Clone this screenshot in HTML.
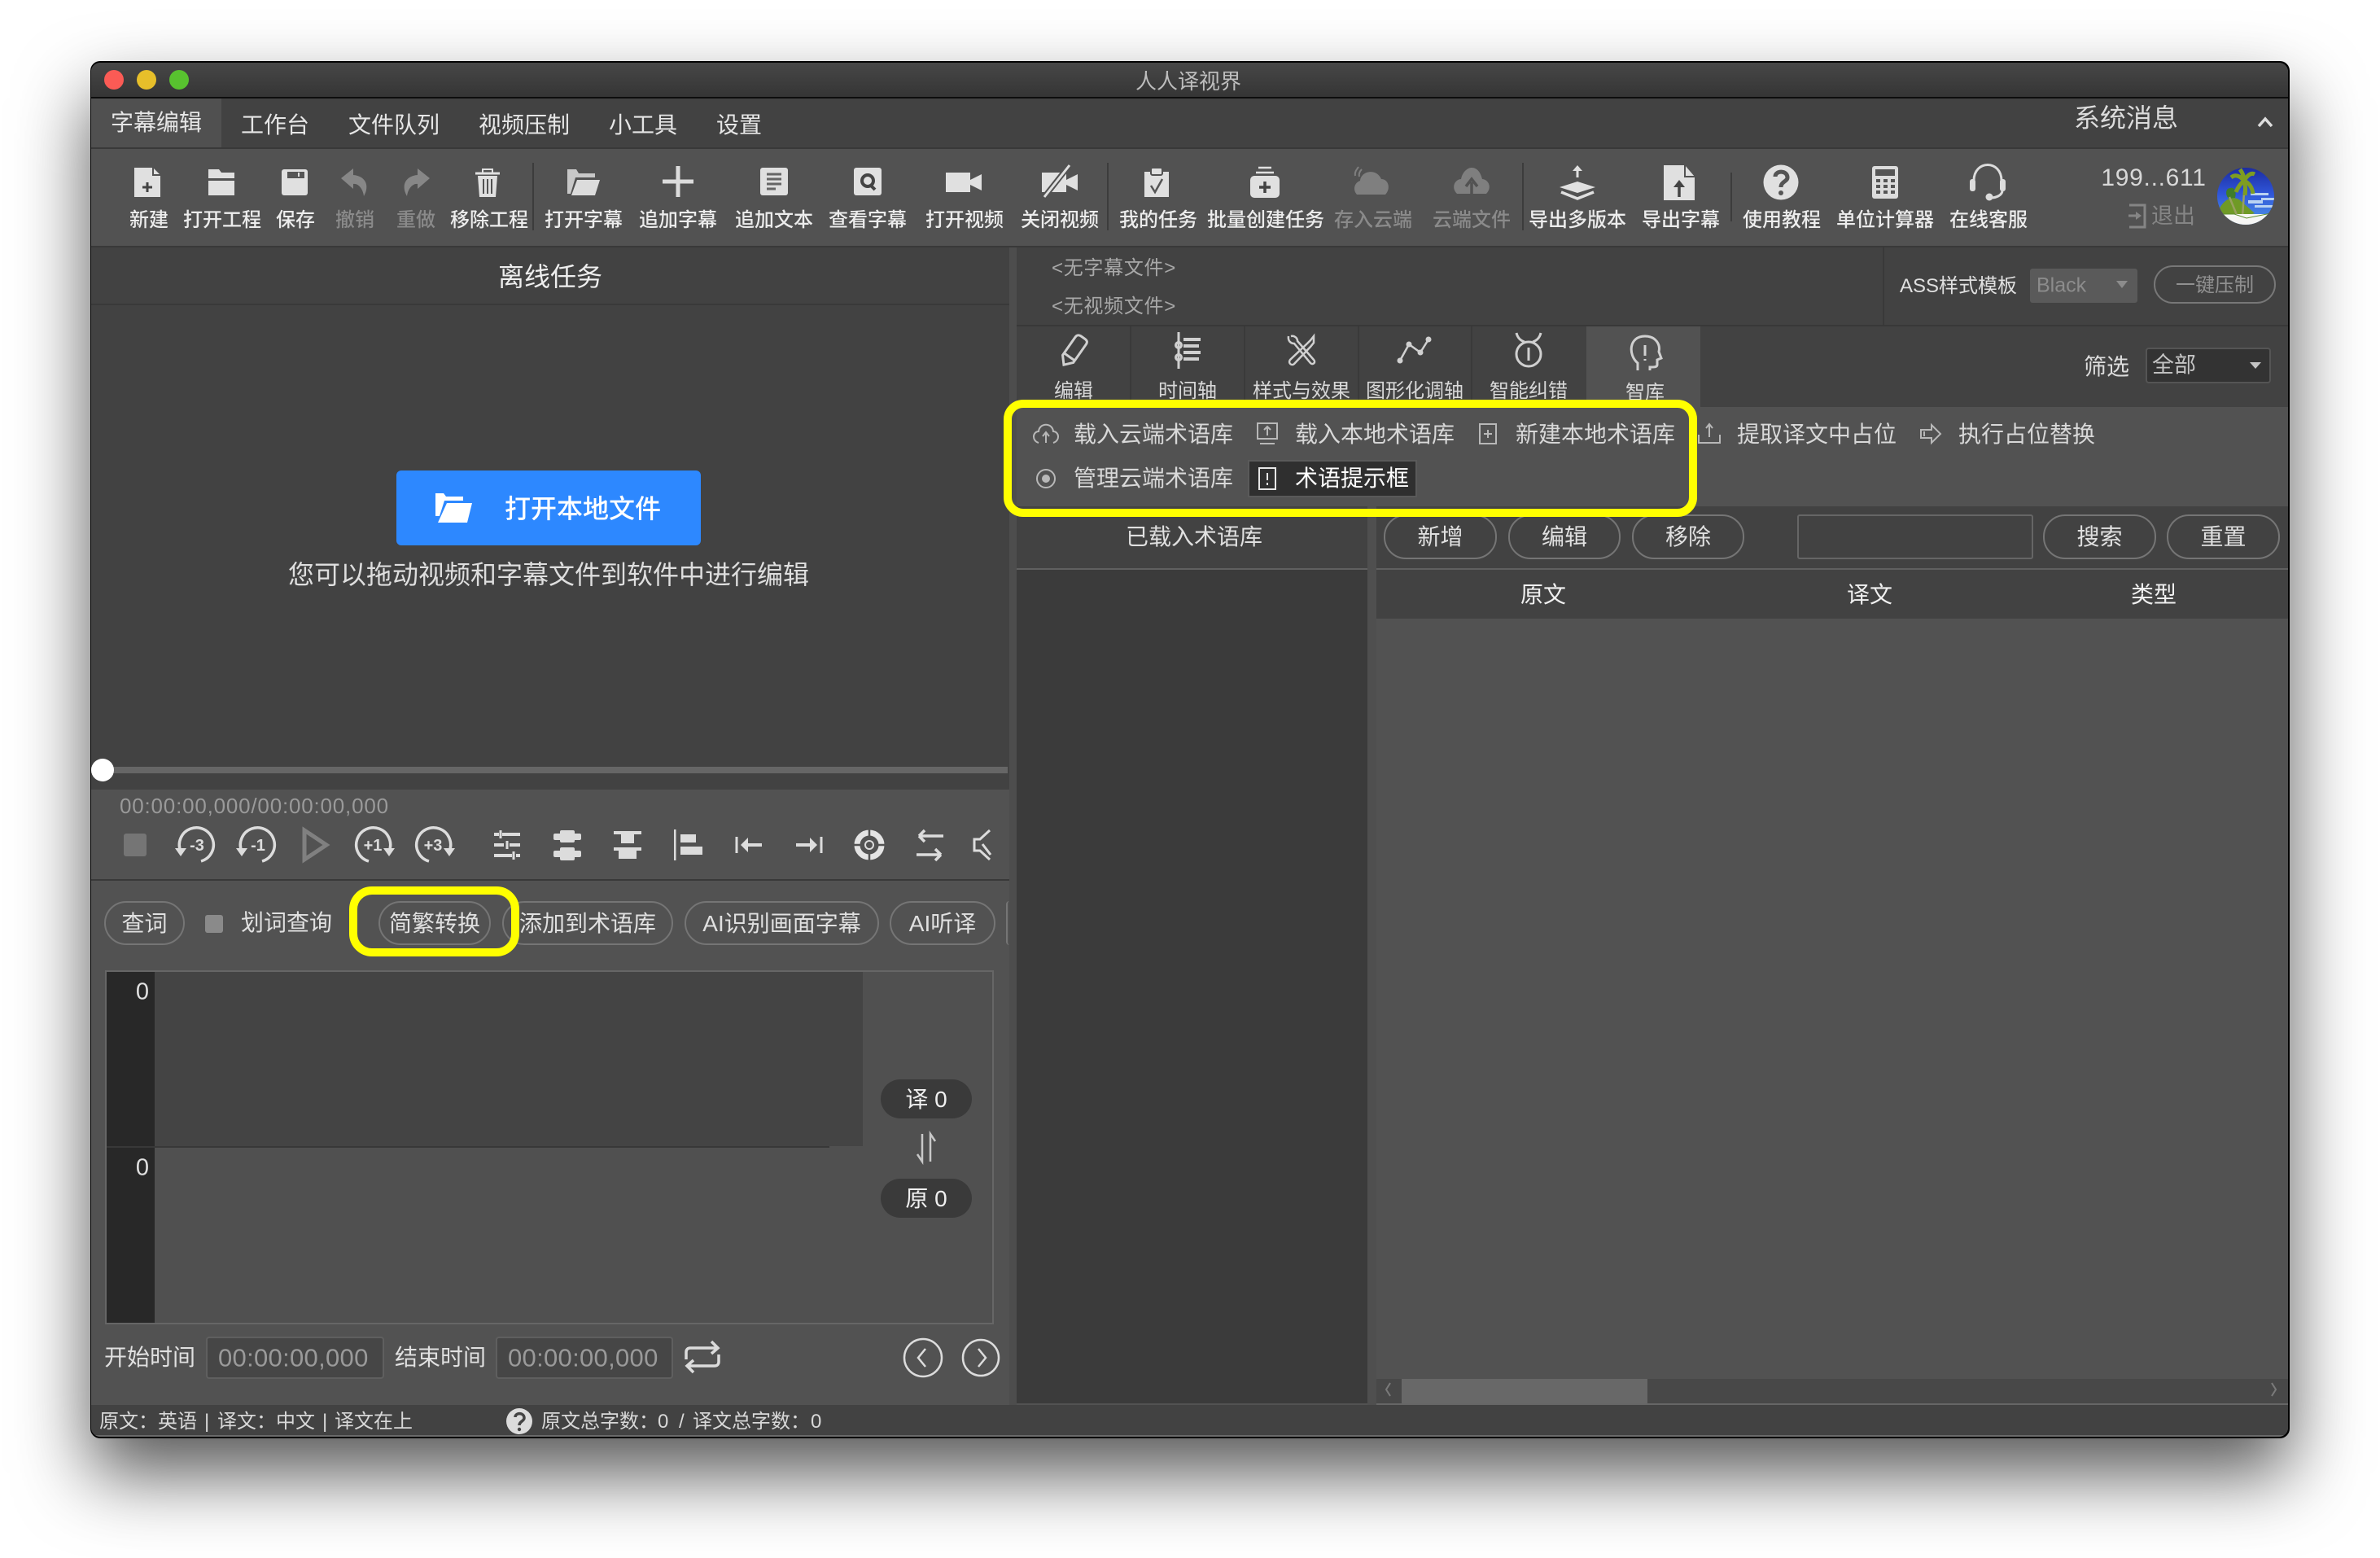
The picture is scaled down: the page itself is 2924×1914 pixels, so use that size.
<!DOCTYPE html>
<html lang="zh-CN">
<head>
<meta charset="utf-8">
<title>人人译视界</title>
<style>
html,body{margin:0;padding:0;width:2924px;height:1914px;overflow:hidden;background:#fff}
body{position:relative;font-family:"Liberation Sans","Noto Sans CJK SC",sans-serif;color:#e6e6e6}
.r{position:absolute;box-sizing:border-box}
.c,.l{position:absolute;white-space:nowrap;line-height:1}
.c{transform:translate(-50%,calc(-50% + 2px))}
.l{transform:translateY(calc(-50% + 2px))}
.tb{font-size:24px;top:269px;color:#ececec;font-weight:500}
.dis{color:#8a8a8a}
.m{font-size:28px;top:152px;color:#e6e6e6}
.s{font-size:28px;color:#d8d8d8}
.tab{font-size:24px;top:479px;color:#d8d8d8}
.st{font-size:24px;top:1745px;color:#d8d8d8}
.p{position:absolute;box-sizing:border-box;height:54px;border:2px solid #757575;border-radius:27px;font-size:28px;color:#e0e0e0;text-align:center;line-height:51px;white-space:nowrap}
svg{position:absolute;left:0;top:0}
</style>
</head>
<body>
<!-- window -->
<div class="r" style="left:111px;top:75px;width:2702px;height:1692px;border-radius:12px;background:#000;box-shadow:0 44px 90px rgba(0,0,0,.66)"></div>
<div class="r" style="left:112px;top:77px;width:2699px;height:1688px;border-radius:11px;overflow:hidden;background:#525252">
  <div class="r" style="left:0;top:0;width:2700px;height:42px;background:linear-gradient(#474747,#353535)"></div>
  <div class="r" style="left:0;top:42px;width:2700px;height:2px;background:#0d0d0d"></div>
  <div class="r" style="left:0;top:44px;width:2700px;height:60px;background:#424242"></div>
  <div class="r" style="left:0;top:44px;width:160px;height:60px;background:#505050"></div>
  <div class="r" style="left:0;top:104px;width:2700px;height:2px;background:#393939"></div>
  <div class="r" style="left:0;top:106px;width:2700px;height:119px;background:#525252"></div>
  <div class="r" style="left:0;top:225px;width:2700px;height:2px;background:#393939"></div>
  <!-- left top -->
  <div class="r" style="left:0;top:227px;width:1128px;height:666px;background:#424242"></div>
  <div class="r" style="left:0;top:296px;width:1128px;height:2px;background:#393939"></div>
  <div class="r" style="left:0;top:865px;width:1126px;height:8px;background:#666"></div>
  <div class="r" style="left:1128px;top:227px;width:9px;height:1422px;background:#4d4d4d"></div>
  <!-- lower-left -->
  <div class="r" style="left:0;top:893px;width:1128px;height:756px;background:#525252"></div>
  <div class="r" style="left:0;top:1003px;width:1128px;height:2px;background:#393939"></div>
  <!-- editor -->
  <div class="r" style="left:17px;top:1115px;width:1092px;height:435px;border:2px solid #666;background:#505050"></div>
  <div class="r" style="left:19px;top:1117px;width:59px;height:431px;background:#282828"></div>
  <div class="r" style="left:78px;top:1117px;width:870px;height:214px;background:#444"></div>
  <div class="r" style="left:19px;top:1331px;width:888px;height:2px;background:#383838"></div>
  <!-- inputs -->
  <div class="r" style="left:141px;top:1565px;width:219px;height:52px;border:2px solid #5f5f5f;border-radius:4px;background:#464646"></div>
  <div class="r" style="left:497px;top:1565px;width:218px;height:52px;border:2px solid #5f5f5f;border-radius:4px;background:#464646"></div>
  <!-- right top -->
  <div class="r" style="left:1137px;top:227px;width:1563px;height:96px;background:#424242"></div>
  <div class="r" style="left:2201px;top:227px;width:2px;height:96px;background:#393939"></div>
  <div class="r" style="left:1137px;top:322px;width:1563px;height:2px;background:#383838"></div>
  <div class="r" style="left:1137px;top:324px;width:1563px;height:99px;background:#424242"></div>
  <div class="r" style="left:1276px;top:324px;width:2px;height:99px;background:#3a3a3a"></div>
  <div class="r" style="left:1416px;top:324px;width:2px;height:99px;background:#3a3a3a"></div>
  <div class="r" style="left:1556px;top:324px;width:2px;height:99px;background:#3a3a3a"></div>
  <div class="r" style="left:1695px;top:324px;width:2px;height:99px;background:#3a3a3a"></div>
  <div class="r" style="left:1837px;top:324px;width:140px;height:99px;background:#525252"></div>
  <!-- sub toolbar -->
  <div class="r" style="left:1137px;top:423px;width:1563px;height:122px;background:#525252"></div>
  <div class="r" style="left:1421px;top:488px;width:208px;height:46px;background:#2f2f2f;border:2px solid #5a5a5a"></div>
  <!-- row pills -->
  <div class="r" style="left:1137px;top:545px;width:1563px;height:76px;background:#424242"></div>
  <div class="r" style="left:1137px;top:621px;width:1563px;height:2px;background:#606060"></div>
  <div class="r" style="left:1137px;top:623px;width:431px;height:1024px;background:#3b3b3b"></div>
  <div class="r" style="left:1568px;top:545px;width:11px;height:1104px;background:#4f4f4f"></div>
  <div class="r" style="left:1579px;top:623px;width:1121px;height:60px;background:#424242"></div>
  <div class="r" style="left:1579px;top:683px;width:1121px;height:934px;background:#525252"></div>
  <div class="r" style="left:1579px;top:1617px;width:1121px;height:30px;background:#484848"></div>
  <div class="r" style="left:1610px;top:1617px;width:302px;height:30px;background:#686868"></div>
  <div class="r" style="left:1579px;top:1647px;width:1121px;height:2px;background:#666"></div>
  <!-- status -->
  <div class="r" style="left:0;top:1649px;width:2700px;height:37px;background:#424242"></div>
  <div class="r" style="left:0;top:1686px;width:2700px;height:2px;background:#6a6a6a"></div>
</div>

<!-- traffic lights -->
<div class="r" style="left:128px;top:86px;width:24px;height:24px;border-radius:50%;background:#fb5b55"></div>
<div class="r" style="left:168px;top:86px;width:24px;height:24px;border-radius:50%;background:#e7bf2a"></div>
<div class="r" style="left:208px;top:86px;width:24px;height:24px;border-radius:50%;background:#58c22f"></div>
<span class="c" style="left:1460px;top:98px;font-size:26px;color:#bdbdbd">人人译视界</span>

<!-- menu -->
<span class="c m" style="left:192px;top:149px">字幕编辑</span>
<span class="c m" style="left:338px">工作台</span>
<span class="c m" style="left:484px">文件队列</span>
<span class="c m" style="left:644px">视频压制</span>
<span class="c m" style="left:790px">小工具</span>
<span class="c m" style="left:908px">设置</span>
<span class="c" style="left:2612px;top:143px;font-size:32px;color:#dcdcdc">系统消息</span>

<!-- toolbar labels -->
<span class="c tb" style="left:183px">新建</span>
<span class="c tb" style="left:273px">打开工程</span>
<span class="c tb" style="left:363px">保存</span>
<span class="c tb dis" style="left:436px">撤销</span>
<span class="c tb dis" style="left:511px">重做</span>
<span class="c tb" style="left:601px">移除工程</span>
<span class="c tb" style="left:717px">打开字幕</span>
<span class="c tb" style="left:833px">追加字幕</span>
<span class="c tb" style="left:951px">追加文本</span>
<span class="c tb" style="left:1066px">查看字幕</span>
<span class="c tb" style="left:1185px">打开视频</span>
<span class="c tb" style="left:1302px">关闭视频</span>
<span class="c tb" style="left:1423px">我的任务</span>
<span class="c tb" style="left:1555px">批量创建任务</span>
<span class="c tb dis" style="left:1687px">存入云端</span>
<span class="c tb dis" style="left:1808px">云端文件</span>
<span class="c tb" style="left:1938px">导出多版本</span>
<span class="c tb" style="left:2065px">导出字幕</span>
<span class="c tb" style="left:2189px">使用教程</span>
<span class="c tb" style="left:2316px">单位计算器</span>
<span class="c tb" style="left:2443px">在线客服</span>
<span class="c" style="left:2646px;top:217px;font-size:30px;letter-spacing:.7px;color:#d8d8d8">199...611</span>
<span class="c" style="left:2670px;top:264px;font-size:27px;color:#858585">退出</span>

<!-- left panel text -->
<span class="c" style="left:676px;top:338px;font-size:32px;color:#eee">离线任务</span>
<div class="r" style="left:487px;top:578px;width:374px;height:92px;background:#2d88ff;border-radius:6px"></div>
<span class="c" style="left:716px;top:623px;font-size:32px;color:#fff;font-weight:500">打开本地文件</span>
<span class="c" style="left:674px;top:704px;font-size:32px;color:#dedede">您可以拖动视频和字幕文件到软件中进行编辑</span>
<div class="r" style="left:112px;top:932px;width:28px;height:28px;border-radius:50%;background:#fff"></div>
<span class="l" style="left:147px;top:988px;font-size:26px;color:#9a9a9a;letter-spacing:.8px">00:00:00,000/00:00:00,000</span>

<!-- pills left -->
<div class="p" style="left:128px;top:1107px;width:99px">查词</div>
<div class="r" style="left:252px;top:1124px;width:22px;height:22px;background:#8a8a8a;border-radius:3px"></div>
<span class="l" style="left:296px;top:1132px;font-size:28px;color:#e0e0e0">划词查询</span>
<div class="p" style="left:465px;top:1107px;width:138px">简繁转换</div>
<div class="p" style="left:617px;top:1107px;width:210px">添加到术语库</div>
<div class="p" style="left:841px;top:1107px;width:239px">AI识别画面字幕</div>
<div class="p" style="left:1093px;top:1107px;width:130px">AI听译</div>
<div class="r" style="left:1236px;top:1107px;width:4px;height:54px;border-left:2px solid #757575;border-radius:27px 0 0 27px"></div>

<span class="c" style="left:175px;top:1217px;font-size:29px;color:#e0e0e0">0</span>
<span class="c" style="left:175px;top:1433px;font-size:29px;color:#e0e0e0">0</span>
<div class="r" style="left:1082px;top:1326px;width:112px;height:48px;border-radius:24px;background:#3a3a3a"></div>
<span class="c" style="left:1138px;top:1349px;font-size:28px;color:#f0f0f0">译 0</span>
<div class="r" style="left:1082px;top:1448px;width:112px;height:48px;border-radius:24px;background:#3a3a3a"></div>
<span class="c" style="left:1138px;top:1471px;font-size:28px;color:#f0f0f0">原 0</span>

<span class="l" style="left:128px;top:1666px;font-size:28px;color:#e0e0e0">开始时间</span>
<span class="l" style="left:268px;top:1666px;font-size:31px;letter-spacing:.3px;color:#9a9a9a">00:00:00,000</span>
<span class="l" style="left:485px;top:1666px;font-size:28px;color:#e0e0e0">结束时间</span>
<span class="l" style="left:624px;top:1666px;font-size:31px;letter-spacing:.3px;color:#9a9a9a">00:00:00,000</span>

<span class="l st" style="left:122px">原文：</span>
<span class="l st" style="left:194px">英语</span>
<span class="l st" style="left:251px">|</span>
<span class="l st" style="left:267px">译文：</span>
<span class="l st" style="left:339px">中文</span>
<span class="l st" style="left:396px">|</span>
<span class="l st" style="left:411px">译文在上</span>
<span class="l st" style="left:665px">原文总字数：</span>
<span class="l st" style="left:808px">0</span>
<span class="l st" style="left:834px">/</span>
<span class="l st" style="left:851px">译文总字数：</span>
<span class="l st" style="left:996px">0</span>

<!-- right panel -->
<span class="l" style="left:1292px;top:328px;font-size:24px;letter-spacing:.7px;color:#a8a8a8">&lt;无字幕文件&gt;</span>
<span class="l" style="left:1292px;top:375px;font-size:24px;letter-spacing:.7px;color:#a8a8a8">&lt;无视频文件&gt;</span>
<span class="l" style="left:2334px;top:350px;font-size:24px;color:#e0e0e0">ASS样式模板</span>
<div class="r" style="left:2494px;top:330px;width:132px;height:42px;background:#5a5a5a;border-radius:3px"></div>
<span class="l" style="left:2502px;top:349px;font-size:25px;color:#8c8c8c">Black</span>
<div class="r" style="left:2646px;top:326px;width:150px;height:47px;border:2px solid #777;border-radius:24px"></div>
<span class="c" style="left:2721px;top:349px;font-size:24px;color:#909090">一键压制</span>

<span class="c tab" style="left:1319px">编辑</span>
<span class="c tab" style="left:1459px">时间轴</span>
<span class="c tab" style="left:1599px">样式与效果</span>
<span class="c tab" style="left:1738px">图形化调轴</span>
<span class="c tab" style="left:1878px">智能纠错</span>
<span class="c tab" style="left:2021px;top:481px">智库</span>
<span class="c" style="left:2588px;top:449px;font-size:28px;color:#dcdcdc">筛选</span>
<div class="r" style="left:2636px;top:427px;width:154px;height:44px;background:#333;border:2px solid #555;border-radius:4px"></div>
<span class="l" style="left:2644px;top:447px;font-size:27px;color:#c4c4c4">全部</span>

<span class="l s" style="left:1319px;top:532px">载入云端术语库</span>
<span class="l s" style="left:1591px;top:532px">载入本地术语库</span>
<span class="l s" style="left:1862px;top:532px">新建本地术语库</span>
<span class="l s" style="left:2134px;top:532px">提取译文中占位</span>
<span class="l s" style="left:2406px;top:532px">执行占位替换</span>
<span class="l s" style="left:1319px;top:586px">管理云端术语库</span>
<span class="l s" style="left:1591px;top:586px;color:#fff">术语提示框</span>

<span class="c" style="left:1467px;top:658px;font-size:28px;color:#e0e0e0">已载入术语库</span>
<div class="p" style="left:1700px;top:632px;width:139px;height:55px;line-height:52px">新增</div>
<div class="p" style="left:1853px;top:632px;width:138px;height:55px;line-height:52px">编辑</div>
<div class="p" style="left:2005px;top:632px;width:138px;height:55px;line-height:52px">移除</div>
<div class="r" style="left:2208px;top:632px;width:290px;height:55px;border:2px solid #666;border-radius:3px"></div>
<div class="p" style="left:2510px;top:632px;width:139px;height:55px;line-height:52px">搜索</div>
<div class="p" style="left:2662px;top:632px;width:139px;height:55px;line-height:52px">重置</div>
<span class="c" style="left:1896px;top:729px;font-size:28px;color:#f0f0f0">原文</span>
<span class="c" style="left:2297px;top:729px;font-size:28px;color:#f0f0f0">译文</span>
<span class="c" style="left:2646px;top:729px;font-size:28px;color:#f0f0f0">类型</span>

<!-- icons -->
<svg width="2924" height="1914" viewBox="0 0 2924 1914">
<defs>
<clipPath id="av"><circle cx="2759" cy="241" r="35"/></clipPath>
<linearGradient id="sky" x1="0" y1="0" x2="0" y2="1"><stop offset="0" stop-color="#1c2ca0"/><stop offset=".45" stop-color="#2f55d8"/><stop offset="1" stop-color="#4f96ea"/></linearGradient>
</defs>
<!-- separators in toolbar -->
<path d="M655 200V283M1361 200V283M1871 200V283M2127 212V272" stroke="#3c3c3c" stroke-width="2" fill="none"/>
<path d="M2775 155L2783 146 2791 155" stroke="#ddd" stroke-width="3.5" fill="none"/>

<!-- new -->
<g transform="translate(181,224)"><path d="M-16-18H7L16-9V18H-16Z" fill="#e0e0e0"/><path d="M7-19V-9H17" stroke="#525252" stroke-width="2" fill="none"/><path d="M-6 6H6M0 0V12" stroke="#444" stroke-width="3"/></g>
<!-- project folder -->
<g transform="translate(272,224)"><path d="M-16-16H-3L0-12H16V-5H-16ZM-16-2H16V16H-16Z" fill="#e0e0e0"/></g>
<!-- save -->
<g transform="translate(362,224)"><rect x="-16" y="-16" width="32" height="32" rx="3" fill="#e0e0e0"/><rect x="-9" y="-13" width="21" height="8" fill="#555"/><rect x="4" y="-12" width="2" height="5" fill="#ddd"/></g>
<!-- undo redo -->
<g transform="translate(436,224)"><path d="M-17-5L-2-17V-9C12-8 19 3 11 17C10 8 4 1-2 2V8Z" fill="#878787"/></g>
<g transform="translate(511,224) scale(-1,1)"><path d="M-17-5L-2-17V-9C12-8 19 3 11 17C10 8 4 1-2 2V8Z" fill="#878787"/></g>
<!-- trash -->
<g transform="translate(599,224)"><path d="M-15-11H15" stroke="#e0e0e0" stroke-width="3"/><path d="M-6-11V-16H6V-11" stroke="#e0e0e0" stroke-width="2" fill="none"/><path d="M-12-8H12L10 18H-10Z" fill="#e0e0e0"/><path d="M-5-4V14M0-4V14M5-4V14" stroke="#525252" stroke-width="2"/></g>
<!-- open folder -->
<g transform="translate(716,224)"><path d="M-19 14V-16H-8L-5-11H15V-6H-9L-15 14Z" fill="#c8c8c8"/><path d="M-7-3H21L15 16H-14Z" fill="#dcdcdc"/></g>
<!-- plus -->
<path d="M814 223H852M833 204V242" stroke="#dcdcdc" stroke-width="5" fill="none"/>
<!-- doc -->
<g transform="translate(951,223)"><rect x="-17" y="-17" width="34" height="34" rx="3" fill="#e0e0e0"/><path d="M-9-9H9M-9-3H9M-9 3H9M-9 9H2" stroke="#666" stroke-width="3"/></g>
<!-- Q doc -->
<g transform="translate(1066,223)"><rect x="-17" y="-17" width="34" height="34" rx="3" fill="#e0e0e0"/><circle cy="-1" r="7" fill="none" stroke="#444" stroke-width="4"/><path d="M3 4L9 10" stroke="#444" stroke-width="4"/></g>
<!-- camera -->
<g transform="translate(1184,224)" fill="#e0e0e0"><rect x="-22" y="-12" width="30" height="24"/><path d="M8-3L22-10V10L8 3Z"/></g>
<g transform="translate(1302,224)"><g fill="#e0e0e0"><rect x="-22" y="-12" width="30" height="24"/><path d="M8-3L22-10V10L8 3Z"/></g><path d="M11-20L-19 18" stroke="#525252" stroke-width="7"/><path d="M12-21L-19 18" stroke="#e0e0e0" stroke-width="3"/></g>
<!-- clipboard -->
<g transform="translate(1421,224)"><rect x="-15" y="-13" width="30" height="31" fill="#e0e0e0"/><rect x="-7" y="-18" width="14" height="9" rx="2" fill="#e0e0e0" stroke="#525252" stroke-width="2"/><path d="M-7 4L-2 12 7-4" stroke="#555" stroke-width="2.5" fill="none"/></g>
<!-- bottle -->
<g transform="translate(1554,224)"><path d="M-8-18H8M-11-12H11" stroke="#e0e0e0" stroke-width="2.5"/><rect x="-18" y="-8" width="36" height="27" rx="5" fill="#e0e0e0"/><path d="M-7 6H7M0-1V13" stroke="#444" stroke-width="3.5"/></g>
<!-- clouds -->
<g transform="translate(1685,224)"><path d="M-18 15C-24 8-20 0-14-2C-13-14 6-18 12-4C21-4 24 8 17 15Z" fill="#7f7f7f"/><path d="M-20-8C-21-13-18-16-16-19M-15-7C-16-11-14-14-12-16" stroke="#7f7f7f" stroke-width="2" fill="none"/></g>
<g transform="translate(1808,224)"><path d="M-18 14C-26 6-20-4-13-4C-11-14-4-18 0-18C7-18 11-12 13-4C20-4 26 6 18 14Z" fill="#7f7f7f"/><path d="M0 15V0M-7 5L0-4 7 5" stroke="#525252" stroke-width="3.5" fill="none"/></g>
<!-- export multi -->
<g transform="translate(1938,224)"><path d="M0-6V-18" stroke="#e0e0e0" stroke-width="3"/><path d="M-6-14L0-21 6-14Z" fill="#e0e0e0"/><path d="M0-1L22 6 0 13-22 6Z" fill="#e0e0e0"/><path d="M-20 12L0 20 20 12" stroke="#e0e0e0" stroke-width="3.5" fill="none"/></g>
<!-- export -->
<g transform="translate(2063,224)"><path d="M-19-21H7L19-7V22H-19Z" fill="#e0e0e0"/><path d="M7-22V-7H20" stroke="#525252" stroke-width="2" fill="none"/><path d="M0 18V3" stroke="#444" stroke-width="3.5"/><path d="M-7 6L0-3 7 6Z" fill="#444"/></g>
<!-- help -->
<g transform="translate(2188,224)"><circle r="21.5" fill="#e0e0e0"/><path d="M-7-7C-7-15 8-15 8-6C8-1 0-1 0 6" stroke="#555" stroke-width="5" fill="none"/><circle cy="13" r="3" fill="#555"/></g>
<!-- calc -->
<g transform="translate(2316,224)"><rect x="-16" y="-20" width="32" height="40" rx="3" fill="#dcdcdc"/><rect x="-12" y="-16" width="24" height="8" fill="#555"/><g fill="#555"><rect x="-11" y="-4" width="5" height="4"/><rect x="-2" y="-4" width="5" height="4"/><rect x="7" y="-4" width="5" height="4"/><rect x="-11" y="3" width="5" height="4"/><rect x="-2" y="3" width="5" height="4"/><rect x="7" y="3" width="5" height="4"/><rect x="-11" y="10" width="5" height="4"/><rect x="-2" y="10" width="5" height="4"/><rect x="7" y="10" width="5" height="4"/></g></g>
<!-- headset -->
<g transform="translate(2442,224)"><path d="M-17 2V-2C-17-28 17-28 17-2V2" stroke="#dcdcdc" stroke-width="3" fill="none"/><rect x="-22" y="-4" width="7" height="15" rx="3" fill="#dcdcdc"/><rect x="15" y="-4" width="7" height="15" rx="3" fill="#dcdcdc"/><path d="M18 10C18 16 10 19 4 19" stroke="#dcdcdc" stroke-width="3" fill="none"/><circle cx="2" cy="18" r="4.5" fill="#dcdcdc"/></g>
<!-- logout -->
<g transform="translate(2625,265)"><path d="M-9-13H10V14H-9" stroke="#858585" stroke-width="3" fill="none"/><path d="M-10 0H1" stroke="#858585" stroke-width="3"/><path d="M-1-5L6 0-1 5Z" fill="#858585"/></g>
<!-- avatar -->
<g clip-path="url(#av)">
<rect x="2724" y="206" width="70" height="70" fill="url(#sky)"/>
<path d="M2765 237h22v3h-22zM2762 246h18v4h-18zM2778 243h16v3h-16zM2770 252h24v3h-24z" fill="#b9d2f2"/>
<path d="M2726 258C2732 244 2744 240 2752 246L2770 262 2750 268H2726Z" fill="#6f9a26"/>
<path d="M2738 244C2733 238 2735 231 2740 231C2745 229 2748 236 2746 243Z" fill="#3f7d2a"/>
<path d="M2755 266L2758 222M2748 264L2739 242" stroke="#98a060" stroke-width="2.5" fill="none"/>
<path d="M2757 222C2750 214 2745 215 2741 218M2757 222C2752 226 2749 231 2747 236M2757 222C2757 216 2755 212 2752 208M2757 222C2762 214 2766 212 2770 214M2757 222C2764 225 2767 231 2768 238M2757 222C2759 228 2759 234 2758 240" stroke="#7e9d22" stroke-width="5" fill="none"/>
<path d="M2724 263H2794V278H2724Z" fill="#f6f6f4"/>
<path d="M2724 263H2745L2760 268 2790 262" stroke="#5f8f30" stroke-width="1" fill="none"/>
</g>
<!-- blue folder -->
<g transform="translate(557,624)" fill="#fff"><path d="M-22 10V-18H-12L-9-14H12V-9H-11L-17 10Z"/><path d="M-8-6H23L17 18H-19Z"/></g>

<!-- media -->
<rect x="152" y="1024" width="28" height="28" rx="3" fill="#757575"/>
<g stroke="#dcdcdc" stroke-width="3.5" fill="none">
<path transform="translate(240,1038)" d="M7 20A21 21 0 1 0-18 8"/>
<path transform="translate(315,1038)" d="M7 20A21 21 0 1 0-18 8"/>
<path transform="translate(460,1038)" d="M-7 20A21 21 0 1 1 18 8"/>
<path transform="translate(534,1038)" d="M-7 20A21 21 0 1 1 18 8"/>
</g>
<g fill="#dcdcdc">
<path transform="translate(240,1038)" d="M-25 4L-18 14-11 4Z"/>
<path transform="translate(315,1038)" d="M-25 4L-18 14-11 4Z"/>
<path transform="translate(460,1038)" d="M25 4L18 14 11 4Z"/>
<path transform="translate(534,1038)" d="M25 4L18 14 11 4Z"/>
</g>
<g font-family="Liberation Sans,sans-serif" font-size="20" font-weight="700" fill="#dcdcdc" text-anchor="middle">
<text x="242" y="1045">-3</text><text x="317" y="1045">-1</text><text x="458" y="1045">+1</text><text x="532" y="1045">+3</text>
</g>
<path d="M374 1020V1056L401 1038Z" stroke="#808080" stroke-width="5" fill="none" stroke-linejoin="miter"/>
<g transform="translate(623,1038)"><path d="M-6-13H16M-16-13H-10M-16 0H-4M3 0H16M-16 13H6M11 13H16" stroke="#dcdcdc" stroke-width="4" fill="none"/><path d="M-8-18V-8M0-5V5M8 8V18" stroke="#dcdcdc" stroke-width="3" fill="none"/></g>
<g transform="translate(697,1038)" fill="#dcdcdc"><rect x="-17" y="-14" width="34" height="8" rx="2"/><rect x="-9" y="-18" width="18" height="15" rx="2"/><rect x="-17" y="7" width="34" height="8" rx="2"/><rect x="-9" y="3" width="18" height="16" rx="2"/></g>
<g transform="translate(771,1038)" fill="#dcdcdc"><rect x="-17" y="-17" width="34" height="4"/><rect x="-8" y="-13" width="16" height="11"/><rect x="-17" y="3" width="34" height="4"/><rect x="-11" y="7" width="22" height="10"/></g>
<g transform="translate(845,1038)" fill="#dcdcdc"><rect x="-17" y="-19" width="2.5" height="38"/><rect x="-9" y="-13" width="19" height="10"/><rect x="-9" y="2" width="27" height="10"/></g>
<g transform="translate(920,1038)"><path d="M-15-10V10" stroke="#dcdcdc" stroke-width="3"/><path d="M-8 0H16" stroke="#dcdcdc" stroke-width="4"/><path d="M-1-9L-10 0-1 9Z" fill="#dcdcdc"/></g>
<g transform="translate(994,1038)"><path d="M15-10V10" stroke="#dcdcdc" stroke-width="3"/><path d="M8 0H-16" stroke="#dcdcdc" stroke-width="4"/><path d="M1-9L10 0 1 9Z" fill="#dcdcdc"/></g>
<g transform="translate(1068,1038)"><circle r="15" fill="none" stroke="#e4e4e4" stroke-width="7"/><path d="M-20 0H20M0-20V20" stroke="#525252" stroke-width="2.5"/><circle r="5" fill="none" stroke="#dcdcdc" stroke-width="2"/></g>
<g transform="translate(1142,1038)" stroke="#dcdcdc" stroke-width="3.5" fill="none"><path d="M-12-11H17M-13-11L-6-18M-13-11L-6-4"/><path d="M-16 12H13M14 12L7 5M14 12L7 19"/></g>
<g transform="translate(1207,1038)" stroke="#dcdcdc" stroke-width="3" fill="none"><path d="M9-18L-3-7H-10V7H-3L9 18"/><path d="M0-1L10 12"/></g>

<!-- swap vertical -->
<g transform="translate(1138,1410)" stroke="#c8c8c8" stroke-width="2.5" fill="none"><path d="M-5-17V17L-11 8"/><path d="M5 17V-17L11-8"/></g>
<!-- repeat -->
<g transform="translate(863,1667)" stroke="#dcdcdc" stroke-width="3.5" fill="none"><path d="M-20 3V-6C-20-9-18-11-15-11H18M11-19L19-11 11-4"/><path d="M20-3V6C20 9 18 11 15 11H-18M-11 19L-19 11-11 4"/></g>
<!-- prev/next -->
<g stroke="#dcdcdc" stroke-width="2.5" fill="none"><circle cx="1134" cy="1668" r="23"/><path d="M1137 1657L1128 1668 1137 1679"/><circle cx="1205" cy="1668" r="22"/><path d="M1202 1657L1211 1668 1202 1679"/></g>
<!-- status help -->
<g transform="translate(638,1746)"><circle r="16" fill="#dcdcdc"/><path d="M-5-5C-5-11 6-11 6-4C6 0 0 0 0 5" stroke="#444" stroke-width="3.5" fill="none"/><circle cy="10" r="2.2" fill="#444"/></g>
<!-- carets -->
<path d="M2600 345H2614L2607 354Z" fill="#8c8c8c"/>
<path d="M2764 445H2778L2771 453Z" fill="#c4c4c4"/>
<!-- scroll chevrons -->
<path d="M1708 1699L1703 1707 1708 1715M2791 1699L2796 1707 2791 1715" stroke="#7a7a7a" stroke-width="2" fill="none"/>

<!-- tab icons -->
<g stroke="#d0d0d0" stroke-width="3" fill="none">
<g transform="translate(1319,431) rotate(35)"><path d="M-8-15C-8-19-5-20-3-20H3C6-20 8-19 8-15V12L0 21-8 12Z"/><path d="M-8 9L8 9"/></g>
<g transform="translate(1459,431)"><path d="M-11-23V22"/><circle cx="-11" cy="-7" r="3.5"/><circle cx="-11" cy="8" r="3.5"/><path d="M-5-14H16M-5-6H14M-5 2H16M-5 10H14" stroke-width="4"/></g>
<g transform="translate(1599,431)" stroke-width="2.5"><path d="M-16-18C-17-12-13-9-9-9L11 15C14 18 18 14 15 11L-5-12C-5-16-9-19-13-18"/><path d="M15-18L11-13 7-9-14 11C-17 15-12 19-9 16L11-5 15-10Z"/></g>
<g transform="translate(1738,431)" stroke-width="2.5"><path d="M-18 12L-7-8 7 2 17-14"/><g fill="#d0d0d0" stroke="none"><circle cx="-18" cy="12" r="3.5"/><circle cx="-7" cy="-8" r="3.5"/><circle cx="7" cy="2" r="3.5"/><circle cx="17" cy="-14" r="3.5"/></g></g>
<g transform="translate(1878,431)"><circle cy="4" r="15"/><path d="M-15-22C-13-14-8-12-5-11M15-22C13-14 8-12 5-11M0-4V12"/></g>
<g transform="translate(2021,433)"><path d="M-9 22V13C-21 3-20-20 0-20C14-20 19-9 17-1L20 7 15 9V15C15 18 12 18 6 18V22"/><path d="M0-9V4M0 8V10"/></g>
</g>

<!-- sub icons -->
<g stroke="#b8b8b8" stroke-width="2" fill="none">
<g transform="translate(1285,533)"><path d="M-9 11C-18 8-16-3-9-3C-8-14 8-14 9-3C16-3 18 8 9 11"/><path d="M0 11V-1M-4 3L0-2 4 3"/></g>
<g transform="translate(1557,533)"><rect x="-12" y="-13" width="24" height="19"/><path d="M-9 12H9M0 2V-9M-4-5L0-9 4-5"/></g>
<g transform="translate(1828,533)"><rect x="-10" y="-12" width="20" height="24"/><path d="M-5 0H5M0-5V5"/></g>
<g transform="translate(2100,533)"><path d="M-13 1V11H13V1M0 4V-11M-4-7L0-12 4-7"/></g>
<g transform="translate(2372,533)"><path d="M-12-5H1V-11L12 0 1 11V5H-12Z"/><path d="M-8-3V3" /></g>
<g transform="translate(1285,588)"><circle r="11"/><circle r="4" fill="#b8b8b8"/></g>
<g transform="translate(1557,588)" stroke="#e6e6e6"><rect x="-10" y="-13" width="20" height="26"/><path d="M0-7V2M0 5V8"/></g>
</g>
</svg>

<!-- yellow highlights -->
<div class="r" style="left:429px;top:1089px;width:209px;height:86px;border:10px solid #ffff00;border-radius:28px"></div>
<div class="r" style="left:1233px;top:491px;width:852px;height:144px;border:10px solid #ffff00;border-radius:24px"></div>
</body>
</html>
